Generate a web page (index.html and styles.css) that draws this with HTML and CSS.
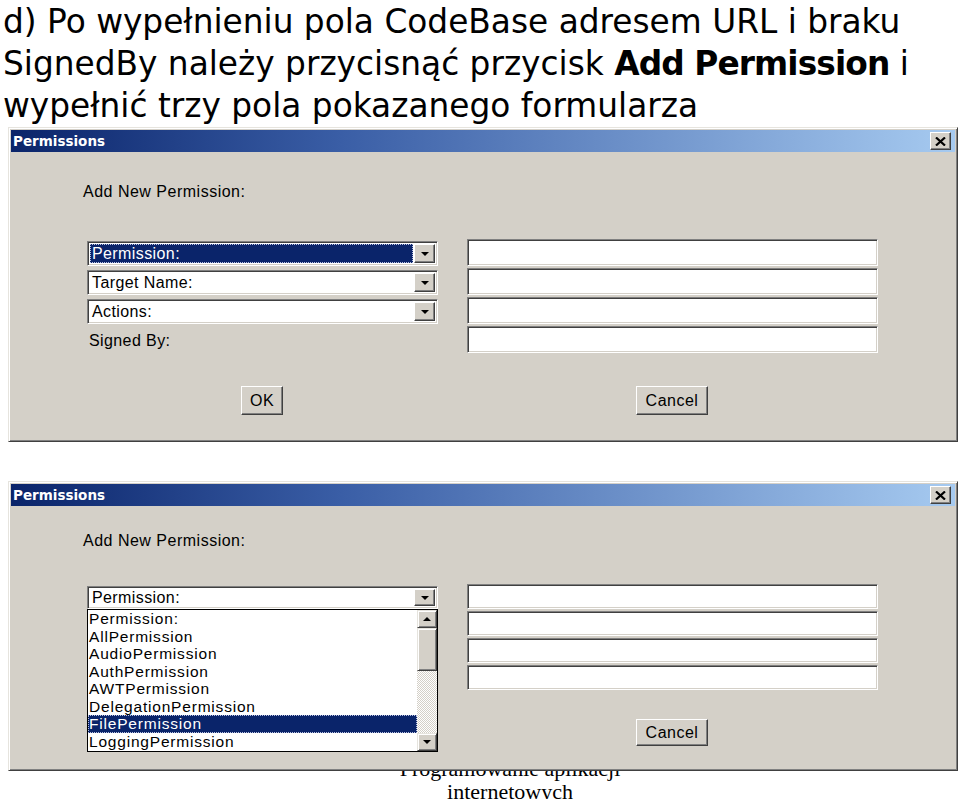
FILE: index.html
```html
<!DOCTYPE html>
<html lang="pl">
<head>
    <meta charset="UTF-8">
    <title>Permissions</title>
    <link rel="stylesheet" href="styles.css">
</head>
<body>

    <h1 class="intro">d) Po wypełnieniu pola CodeBase adresem URL i braku<br>SignedBy należy przycisnąć przycisk <b>Add Permission</b> i<br>wypełnić trzy pola pokazanego formularza</h1>

    <!-- okno 1: formularz pusty -->
    <div class="dialog dialog-first">
        <div class="titlebar">
            <span class="title">Permissions</span>
            <span class="close">
                <svg width="11" height="9" viewBox="0 0 11 9"><path d="M1 0.5 L10 8.5 M10 0.5 L1 8.5" stroke="#000" stroke-width="2.2"/></svg>
            </span>
        </div>
        <div class="caption">Add New Permission:</div>
        <div class="form">
            <div class="left">
                <div class="combo"><span class="combo-text selected">Permission:</span><span class="drop"></span></div>
                <div class="combo"><span class="combo-text">Target Name:</span><span class="drop"></span></div>
                <div class="combo"><span class="combo-text">Actions:</span><span class="drop"></span></div>
                <div class="label">Signed By:</div>
            </div>
            <div class="right">
                <div class="field"></div>
                <div class="field"></div>
                <div class="field"></div>
                <div class="field"></div>
            </div>
        </div>
        <div class="buttons">
            <button class="btn btn-ok">OK</button>
            <button class="btn btn-cancel">Cancel</button>
        </div>
    </div>

    <!-- okno 2: rozwinieta lista zaslania reszte lewej kolumny -->
    <div class="dialog dialog-second">
        <div class="titlebar">
            <span class="title">Permissions</span>
            <span class="close">
                <svg width="11" height="9" viewBox="0 0 11 9"><path d="M1 0.5 L10 8.5 M10 0.5 L1 8.5" stroke="#000" stroke-width="2.2"/></svg>
            </span>
        </div>
        <div class="caption">Add New Permission:</div>
        <div class="form">
            <div class="left">
                <div class="combo-wrap">
                    <div class="combo"><span class="combo-text">Permission:</span><span class="drop"></span></div>
                    <div class="dropdown">
                        <ul class="options">
                            <li>Permission:</li>
                            <li>AllPermission</li>
                            <li>AudioPermission</li>
                            <li>AuthPermission</li>
                            <li>AWTPermission</li>
                            <li>DelegationPermission</li>
                            <li class="selected">FilePermission</li>
                            <li>LoggingPermission</li>
                        </ul>
                        <div class="scrollbar">
                            <span class="sb-btn sb-up"></span>
                            <span class="sb-thumb"></span>
                            <span class="sb-track"></span>
                            <span class="sb-btn sb-down"></span>
                        </div>
                    </div>
                </div>
            </div>
            <div class="right">
                <div class="field"></div>
                <div class="field"></div>
                <div class="field"></div>
                <div class="field"></div>
            </div>
        </div>
        <div class="buttons">
            <button class="btn btn-cancel btn-alone">Cancel</button>
        </div>
    </div>

    <div class="footer">Programowanie aplikacji<br>internetowych</div>

</body>
</html>
```

FILE: styles.css
```css
html, body {
    overflow: hidden;
}
body {
    margin: 0;
    background: #fff;
    font-family: "Liberation Sans", Arial, sans-serif;
    color: #000;
}
.intro {
    margin: 0;
    padding: 1px 0 0 3px;
    font-family: "DejaVu Sans", Verdana, sans-serif;
    font-size: 32.8px;
    font-weight: normal;
    line-height: 42px;
    white-space: nowrap;
}
.intro b {
    font-weight: bold;
    letter-spacing: -0.9px;
}

/* okno dialogowe */
.dialog {
    position: relative;
    z-index: 1;
    box-sizing: border-box;
    width: 950px;
    margin-left: 8px;
    padding: 2px;
    background: #d4d0c8;
    border: 1px solid;
    border-color: #e6e4de #404040 #404040 #e6e4de;
    box-shadow: inset 1px 1px #fff, inset -1px -1px #808080;
}
.dialog-second {
    margin-top: 39px;
}
.titlebar {
    height: 22px;
    display: flex;
    align-items: center;
    justify-content: space-between;
    background: linear-gradient(90deg, #0a246a 0%, #3a5ea6 35%, #a6caf0 100%);
}
.title {
    padding-left: 2px;
    font-family: "DejaVu Sans", Verdana, sans-serif;
    font-size: 13.5px;
    font-weight: bold;
    color: #fff;
}
.close {
    box-sizing: border-box;
    width: 21px;
    height: 18px;
    margin-right: 4px;
    display: flex;
    align-items: center;
    justify-content: center;
    background: #d4d0c8;
    border: 1px solid;
    border-color: #fff #404040 #404040 #fff;
    box-shadow: inset -1px -1px #808080;
}
.caption {
    margin: 31px 0 0 72px;
    font-size: 16px;
    letter-spacing: 0.5px;
    line-height: 18px;
}
.dialog-second .caption {
    margin-top: 26px;
}
.form {
    display: flex;
    gap: 29px;
    margin: 38px 0 0 76px;
}
.dialog-second .form {
    margin-top: 34px;
}
.left {
    width: 351px;
    padding-top: 2px;
    display: flex;
    flex-direction: column;
    gap: 4px;
}
.right {
    width: 411px;
    display: flex;
    flex-direction: column;
    gap: 2px;
}

/* pola */
.combo, .field {
    box-sizing: border-box;
    height: 25px;
    background: #fff;
    border: 1px solid;
    border-color: #808080 #fff #fff #808080;
    box-shadow: inset 1px 1px #404040, inset -1px -1px #d4d0c8;
}
.field {
    height: 27px;
}
.dialog-second .field {
    height: 25px;
}
.dialog-second .combo {
    height: 23px;
}
.combo {
    display: flex;
    padding: 2px;
    gap: 1px;
}
.combo-text {
    flex: 1;
    padding-left: 2px;
    font-size: 16px;
    letter-spacing: 0.4px;
    line-height: 19px;
    white-space: nowrap;
}
.dialog-second .combo-text {
    line-height: 17px;
}
.combo-text.selected {
    background: #0a246a;
    color: #fff;
    outline: 1px dotted #b8c0e0;
    outline-offset: -1px;
}
.drop {
    box-sizing: border-box;
    width: 21px;
    display: flex;
    align-items: center;
    justify-content: center;
    background: #d4d0c8;
    border: 1px solid;
    border-color: #fff #404040 #404040 #fff;
    box-shadow: inset -1px -1px #808080;
}
.drop::after, .sb-down::after, .sb-up::after {
    content: "";
    border-left: 4px solid transparent;
    border-right: 4px solid transparent;
    border-top: 4px solid #000;
}
.sb-up::after {
    border-top: none;
    border-bottom: 4px solid #000;
}
.label {
    margin-top: 4px;
    padding-left: 2px;
    font-size: 16px;
    letter-spacing: 0.4px;
    line-height: 18px;
}

/* lista rozwijana */
.combo-wrap {
    position: relative;
}
.dropdown {
    position: absolute;
    top: 100%;
    left: 0;
    z-index: 2;
    box-sizing: border-box;
    width: 351px;
    height: 143px;
    display: flex;
    background: #fff;
    border: 1px solid #000;
}
.options {
    flex: 1;
    margin: 0;
    padding: 0;
    list-style: none;
}
.options li {
    height: 17.5px;
    padding-left: 1px;
    font-size: 15.5px;
    letter-spacing: 0.8px;
    line-height: 17.5px;
    white-space: nowrap;
}
.options li.selected {
    background: #0a246a;
    color: #fff;
    outline: 1px dotted #b8c0e0;
    outline-offset: -1px;
}
.scrollbar {
    width: 20px;
    display: flex;
    flex-direction: column;
}
.sb-btn, .sb-thumb {
    box-sizing: border-box;
    background: #d4d0c8;
    border: 1px solid;
    border-color: #e6e4de #404040 #404040 #e6e4de;
    box-shadow: inset 1px 1px #fff, inset -1px -1px #808080;
}
.sb-btn {
    height: 18px;
    display: flex;
    align-items: center;
    justify-content: center;
}
.sb-thumb {
    height: 43px;
}
.sb-track {
    flex: 1;
    background: repeating-conic-gradient(#fff 0 25%, #d4d0c8 0 50%) 0 0 / 2px 2px;
}

/* przyciski */
.buttons {
    display: flex;
    margin-top: 33px;
    padding-bottom: 24px;
}
.dialog-second .buttons {
    margin-top: 29px;
    padding-bottom: 22px;
}
.btn {
    box-sizing: border-box;
    height: 29px;
    padding: 0;
    font-family: "Liberation Sans", Arial, sans-serif;
    font-size: 16px;
    letter-spacing: 0.5px;
    color: #000;
    background: #d4d0c8;
    border: 1px solid;
    border-color: #fff #404040 #404040 #fff;
    box-shadow: inset -1px -1px #808080;
}
.dialog-second .btn {
    height: 27px;
}
.btn-ok {
    width: 42px;
    margin-left: 230px;
}
.btn-cancel {
    width: 72px;
    margin-left: 353px;
}
.btn-cancel.btn-alone {
    margin-left: 625px;
}

.footer {
    height: 42px;
    margin-top: -14px;
    padding-left: 60px;
    overflow: hidden;
    text-align: center;
    font-family: "Liberation Serif", "Times New Roman", serif;
    font-size: 22px;
    line-height: 23px;
}
```
